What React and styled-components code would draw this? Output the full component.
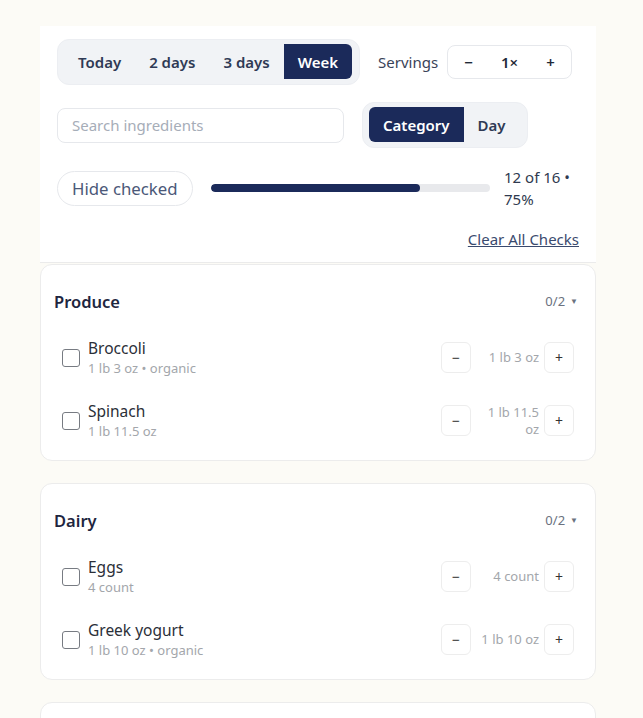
import styled, { createGlobalStyle } from "styled-components";

const GlobalStyle = createGlobalStyle`
  body {
    margin: 0;
    background: #fcfbf6;
    font-family: "Noto Sans", "Open Sans", sans-serif;
    color: #1f2937;
  }
  * {
    box-sizing: border-box;
  }
`

const Page = styled.div`
  width: 556px;
  margin-left: 40px;
  padding-top: 26px;
  padding-bottom: 40px;
`

const Header = styled.div`
  background: #ffffff;
  padding: 13px 17px 13px 17px;
  border-bottom: 1px solid #ebebeb;
  margin-bottom: 1px;
`

const Row = styled.div`
  display: flex;
  align-items: center;
  gap: ${(p) => p.$gap || 18}px;
  margin-top: ${(p) => p.$top || 0}px;
  justify-content: ${(p) => (p.$end ? "flex-end" : "flex-start")};
`

const SegmentWrap = styled.div`
  background: #f1f3f6;
  border: 1px solid #eceef2;
  border-radius: 12px;
  padding: 4px 7px 5px 6px;
`

const SegmentGroup = styled.div`
  display: flex;
  border-radius: 6px;
  overflow: hidden;
`

const SegmentButton = styled.button`
  border: none;
  height: 35px;
  padding: 0 14px;
  font-family: inherit;
  font-size: 15px;
  font-weight: 600;
  background: ${(p) => (p.$active ? "#1b2a5a" : "transparent")};
  color: ${(p) => (p.$active ? "#ffffff" : "#2f3a55")};
  cursor: pointer;
`

const Label = styled.span`
  font-size: 15px;
  line-height: 20px;
  color: #3a4358;
`

const Stepper = styled.div`
  display: flex;
  align-items: center;
  height: 34px;
  border: 1px solid #e6e8ec;
  border-radius: 8px;
  margin-left: -9px;
`

const StepCell = styled.button`
  width: 41px;
  height: 32px;
  border: none;
  background: transparent;
  font-family: inherit;
  font-size: 15px;
  font-weight: 600;
  color: #1f2937;
`

const StepValue = styled.span`
  width: 41px;
  text-align: center;
  font-size: 15px;
  font-weight: 600;
  color: #1f2937;
`

const Search = styled.input`
  width: 287px;
  height: 35px;
  border: 1px solid #e6e8ec;
  border-radius: 8px;
  padding: 0 14px;
  font-family: inherit;
  font-size: 15px;
  outline: none;
  &::placeholder {
    color: #a6adb8;
  }
`

const Pill = styled.button`
  height: 35px;
  padding: 0 14px;
  border: 1px solid #e6e8ec;
  border-radius: 18px;
  background: #ffffff;
  font-family: inherit;
  font-size: 16.8px;
  color: #4b5878;
`

const Track = styled.div`
  flex: 1;
  height: 8px;
  border-radius: 4px;
  background: #e8e9ec;
  overflow: hidden;
`

const Fill = styled.div`
  height: 100%;
  background: #1b2a5a;
  border-radius: 4px;
`

const ProgressText = styled.div`
  width: 75px;
  margin-left: -4px;
  font-size: 15px;
  line-height: 22px;
  color: #2f3a4f;
`

const ClearLink = styled.a`
  font-size: 15px;
  line-height: 20px;
  color: #3a4a6e;
  text-decoration: underline;
  cursor: pointer;
`

const Card = styled.div`
  background: #ffffff;
  border: 1px solid #ececec;
  border-radius: 12px;
  padding: 16px 13px;
  margin-bottom: 22px;
`

const CardHead = styled.div`
  height: 40px;
  display: flex;
  align-items: center;
  justify-content: space-between;
`

const CardTitle = styled.h2`
  margin: 0;
  font-size: 16.5px;
  font-weight: 600;
  color: #1e2640;
`

const Count = styled.span`
  font-size: 13px;
  color: #6b7280;
  padding-right: 4px;
  span {
    font-size: 8px;
    margin-left: 5px;
    vertical-align: 2px;
  }
`

const List = styled.div`
  display: flex;
  flex-direction: column;
  gap: 16px;
  margin-top: 13px;
`

const Item = styled.div`
  display: flex;
  align-items: center;
  padding: 4px 8px;
  gap: 8px;
`

const Check = styled.span`
  width: 18px;
  height: 18px;
  border: 1.5px solid #777b82;
  border-radius: 3px;
  flex-shrink: 0;
`

const Info = styled.div`
  flex: 1;
  display: flex;
  flex-direction: column;
`

const Name = styled.span`
  font-size: 15.5px;
  line-height: 21px;
  color: #2b2f38;
`

const Sub = styled.span`
  font-size: 13px;
  line-height: 18px;
  color: #a3a6ab;
`

const Controls = styled.div`
  display: flex;
  align-items: center;
`

const QtyButton = styled.button`
  width: 30px;
  height: 31px;
  border: 1px solid #ededed;
  border-radius: 6px;
  background: #ffffff;
  font-family: inherit;
  font-size: 14px;
  color: #333333;
  padding: 0;
`

const Amount = styled.span`
  width: 73px;
  padding-right: 5px;
  text-align: right;
  font-size: 13px;
  line-height: 17px;
  color: #a3a6ab;
`

const groups = [
  {
    name: "Produce",
    items: [
      { name: "Broccoli", amount: "1 lb 3 oz", note: "organic" },
      { name: "Spinach", amount: "1 lb 11.5 oz" },
    ],
  },
  {
    name: "Dairy",
    items: [
      { name: "Eggs", amount: "4 count" },
      { name: "Greek yogurt", amount: "1 lb 10 oz", note: "organic" },
    ],
  },
  {
    name: "Pantry",
    items: [
      { name: "Rolled oats", amount: "1 lb" },
      { name: "Olive oil", amount: "6 tbsp" },
    ],
  },
]

const ranges = ["Today", "2 days", "3 days", "Week"]

const App = () => {
  return (
    <Page>
      <GlobalStyle />
      <Header>
        <Row>
          <SegmentWrap>
            <SegmentGroup>
              {ranges.map((r) => (
                <SegmentButton key={r} $active={r === "Week"}>{r}</SegmentButton>
              ))}
            </SegmentGroup>
          </SegmentWrap>
          <Label>Servings</Label>
          <Stepper>
            <StepCell>−</StepCell>
            <StepValue>1×</StepValue>
            <StepCell>+</StepCell>
          </Stepper>
        </Row>

        <Row $top={17}>
          <Search placeholder="Search ingredients" />
          <SegmentWrap>
            <SegmentGroup>
              <SegmentButton $active>Category</SegmentButton>
              <SegmentButton>Day</SegmentButton>
            </SegmentGroup>
          </SegmentWrap>
        </Row>

        <Row $top={18}>
          <Pill>Hide checked</Pill>
          <Track>
            <Fill style={{ width: `${(12 / 16) * 100}%` }} />
          </Track>
          <ProgressText>12 of 16 • 75%</ProgressText>
        </Row>

        <Row $top={19} $end>
          <ClearLink>Clear All Checks</ClearLink>
        </Row>
      </Header>

      {groups.map((g) => (
        <Card key={g.name}>
          <CardHead>
            <CardTitle>{g.name}</CardTitle>
            <Count>0/{g.items.length}<span>▼</span></Count>
          </CardHead>
          <List>
            {g.items.map((item) => (
              <Item key={item.name}>
                <Check />
                <Info>
                  <Name>{item.name}</Name>
                  <Sub>{item.note ? `${item.amount} • ${item.note}` : item.amount}</Sub>
                </Info>
                <Controls>
                  <QtyButton>−</QtyButton>
                  <Amount>{item.amount}</Amount>
                  <QtyButton>+</QtyButton>
                </Controls>
              </Item>
            ))}
          </List>
        </Card>
      ))}
    </Page>
  )
}

export default App
